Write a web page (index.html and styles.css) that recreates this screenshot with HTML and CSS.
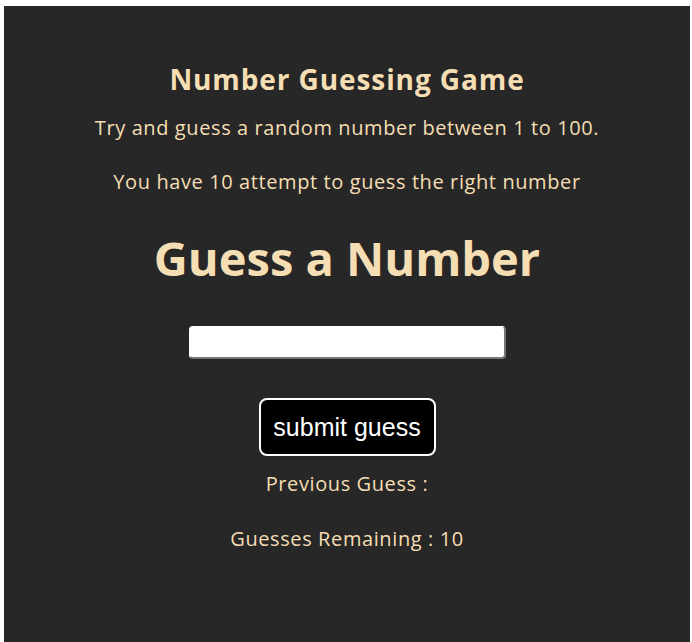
FILE: index.html
```html
<!DOCTYPE html>
<html>
<head>
<meta charset="utf-8">
<link rel="stylesheet" href="styles.css">
</head>
<body>
<main class="game">
  <h1 class="title">Number Guessing Game</h1>
  <p class="intro">Try and guess a random number between 1 to 100.</p>
  <p class="intro second">You have 10 attempt to guess the right number</p>
  <h2 class="heading">Guess a Number</h2>
  <input class="guess-input" type="text">
  <button class="submit">submit guess</button>
  <p class="status">Previous Guess :</p>
  <p class="status remaining">Guesses Remaining : 10</p>
</main>
</body>
</html>
```
FILE: styles.css
```css
html, body {
  background: #ffffff;
}
body {
  margin: 6px 2px 0 4px;
  font-family: "Open Sans", "Noto Sans", sans-serif;
}
.game {
  background: #272727;
  min-height: 640px;
  display: flex;
  flex-direction: column;
  align-items: center;
  padding-top: 55px;
  box-sizing: border-box;
  color: #f5deb3;
}
.title {
  margin: 0;
  font-size: 28px;
  line-height: 36px;
  font-weight: 700;
  letter-spacing: 0.9px;
}
.intro {
  margin: 17px 0 0;
  font-size: 20px;
  line-height: 28px;
  letter-spacing: 0.6px;
}
.intro.second {
  margin-top: 26px;
}
.heading {
  margin: 32px 0 0;
  font-size: 47px;
  line-height: 60px;
  font-weight: 700;
}
.guess-input {
  margin-top: 38px;
  width: 317px;
  height: 33px;
  box-sizing: border-box;
  background: #ffffff;
  border: 1px solid #ffffff;
  border-right: 2px solid #767676;
  border-bottom: 2px solid #767676;
  border-radius: 4px;
  padding: 0 4px;
}
.submit {
  margin-top: 39px;
  width: 177px;
  height: 58px;
  background: #000000;
  color: #ffffff;
  border: 2px solid #ffffff;
  border-radius: 8px;
  font-family: "Liberation Sans", Arial, sans-serif;
  font-size: 25px;
  padding: 0;
}
.status {
  margin: 14px 0 0;
  font-size: 20px;
  line-height: 28px;
  letter-spacing: 0.6px;
}
.status.remaining {
  margin-top: 27px;
}
```
